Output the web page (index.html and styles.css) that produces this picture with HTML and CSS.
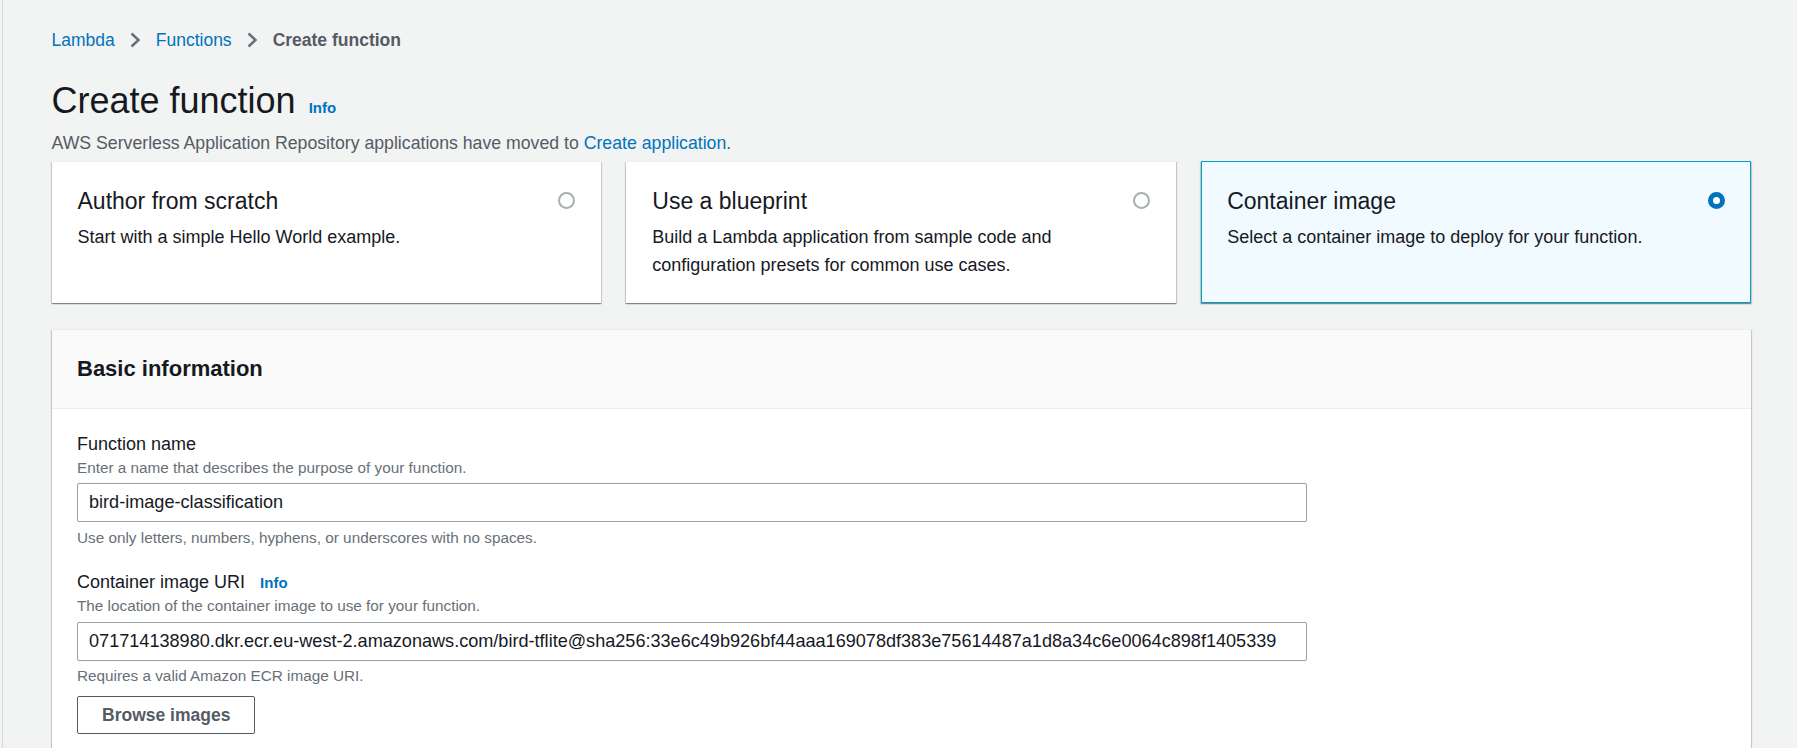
FILE: index.html
```html
<!DOCTYPE html>
<html lang="en">
<head>
<meta charset="utf-8">
<title>Create function</title>
<link rel="stylesheet" href="styles.css">
</head>
<body>
<div class="page">
  <main class="content">
    <nav class="breadcrumbs">
      <a class="crumb-link" href="#">Lambda</a>
      <svg class="crumb-sep" viewBox="0 0 12 16" width="12" height="16"><path d="M2.5 1.5 L9.5 8 L2.5 14.5" fill="none" stroke="#687078" stroke-width="2.5"/></svg>
      <a class="crumb-link" href="#">Functions</a>
      <svg class="crumb-sep" viewBox="0 0 12 16" width="12" height="16"><path d="M2.5 1.5 L9.5 8 L2.5 14.5" fill="none" stroke="#687078" stroke-width="2.5"/></svg>
      <span class="crumb-current">Create function</span>
    </nav>

    <header class="page-header">
      <h1 class="page-title">Create function</h1>
      <a class="info-link info-link--title" href="#">Info</a>
    </header>
    <p class="page-desc">AWS Serverless Application Repository applications have moved to <a class="link" href="#">Create application</a>.</p>

    <div class="tiles">
      <div class="tile">
        <div class="tile-head">
          <span class="tile-title">Author from scratch</span>
          <span class="radio"></span>
        </div>
        <p class="tile-desc">Start with a simple Hello World example.</p>
      </div>
      <div class="tile">
        <div class="tile-head">
          <span class="tile-title">Use a blueprint</span>
          <span class="radio"></span>
        </div>
        <p class="tile-desc">Build a Lambda application from sample code and configuration presets for common use cases.</p>
      </div>
      <div class="tile tile--selected">
        <div class="tile-head">
          <span class="tile-title">Container image</span>
          <span class="radio radio--checked"></span>
        </div>
        <p class="tile-desc">Select a container image to deploy for your function.</p>
      </div>
    </div>

    <section class="panel">
      <div class="panel-header">
        <h2 class="panel-title">Basic information</h2>
      </div>
      <div class="panel-body">
        <div class="field">
          <div class="field-label">Function name</div>
          <div class="field-desc">Enter a name that describes the purpose of your function.</div>
          <div class="input">bird-image-classification</div>
          <div class="field-hint">Use only letters, numbers, hyphens, or underscores with no spaces.</div>
        </div>
        <div class="field field--second">
          <div class="field-label">Container image URI <a class="info-link info-link--label" href="#">Info</a></div>
          <div class="field-desc">The location of the container image to use for your function.</div>
          <div class="input">071714138980.dkr.ecr.eu-west-2.amazonaws.com/bird-tflite@sha256:33e6c49b926bf44aaa169078df383e75614487a1d8a34c6e0064c898f1405339</div>
          <div class="field-hint">Requires a valid Amazon ECR image URI.</div>
          <button class="btn">Browse images</button>
        </div>
      </div>
    </section>
  </main>
</div>
</body>
</html>
```

FILE: styles.css
```css
* { box-sizing: border-box; }

html, body {
  margin: 0;
  padding: 0;
  background: #f2f3f3;
  font-family: "Liberation Sans", Arial, sans-serif;
  color: #16191f;
}

.page {
  margin-left: 2px;
  border-left: 1px solid #d5dbdb;
  min-height: 760px;
}

.content {
  padding: 28px 46px 40px 48.5px;
}

a { text-decoration: none; }

/* Breadcrumbs */
.breadcrumbs {
  display: flex;
  align-items: center;
  height: 24px;
  font-size: 17.5px;
  line-height: 24px;
}
.crumb-link { color: #0073bb; }
.crumb-sep { margin: 0 15px 0 14px; display: block; }
.crumb-current { color: #545b64; font-weight: bold; }

/* Header */
.page-header {
  display: flex;
  align-items: baseline;
  margin-top: 28px;
}
.page-title {
  margin: 0;
  font-size: 36px;
  line-height: 42px;
  font-weight: normal;
  color: #16191f;
}
.info-link {
  color: #0073bb;
  font-weight: bold;
  font-size: 15px;
}
.info-link--title { margin-left: 13px; }
.info-link--label { margin-left: 10px; }

.page-desc {
  margin: 9px 0 0;
  font-size: 17.7px;
  line-height: 24px;
  color: #545b64;
}
.link { color: #0073bb; }

/* Tiles */
.tiles {
  display: grid;
  grid-template-columns: repeat(3, 1fr);
  gap: 25px;
  margin-top: 6px;
}
.tile {
  background: #fff;
  border: 1px solid transparent;
  border-top-color: #eaeded;
  box-shadow: 0 1px 1px 0 rgba(0, 28, 36, 0.3), 1px 1px 1px 0 rgba(0, 28, 36, 0.15), -1px 1px 1px 0 rgba(0, 28, 36, 0.15);
  padding: 25px 25px 23px 25px;
  height: 142px;
}
.tile--selected {
  background: #f1faff;
  border: 1px solid #00a1c9;
}
.tile-head {
  display: flex;
  align-items: center;
  justify-content: space-between;
  height: 28px;
}
.tile-title {
  font-size: 23px;
  line-height: 28px;
  color: #16191f;
}
.tile-desc {
  margin: 8px 0 0;
  font-size: 18px;
  line-height: 28px;
  color: #16191f;
}
.radio {
  width: 17px;
  height: 17px;
  border-radius: 50%;
  border: 2px solid #a3b0b1;
  background: #fff;
  margin-top: -2px;
  flex: none;
}
.radio--checked {
  border: 5px solid #0073bb;
}

/* Panel */
.panel {
  margin-top: 26px;
  background: #fff;
  border-top: 1px solid #eaeded;
  box-shadow: 0 1px 1px 0 rgba(0, 28, 36, 0.3), 1px 1px 1px 0 rgba(0, 28, 36, 0.15), -1px 1px 1px 0 rgba(0, 28, 36, 0.15);
}
.panel-header {
  background: #fafafa;
  border-bottom: 1px solid #eaeded;
  padding: 25px 25.5px;
}
.panel-title {
  margin: 0;
  font-size: 22px;
  line-height: 28px;
  font-weight: bold;
  color: #16191f;
}
.panel-body {
  padding: 23px 25.5px 60px;
}

.field--second { margin-top: 22px; }
.field-label {
  font-size: 18px;
  line-height: 24px;
  color: #16191f;
}
.field-desc {
  margin-top: 1.5px;
  font-size: 15.3px;
  line-height: 20px;
  color: #687078;
}
.input {
  margin-top: 5.5px;
  width: 1230px;
  height: 39px;
  border: 1px solid #95a1a2;
  border-radius: 2px;
  padding: 0 11px;
  font-size: 18.1px;
  line-height: 37px;
  color: #16191f;
  background: #fff;
  white-space: nowrap;
  overflow: hidden;
}
.field-hint {
  margin-top: 5.5px;
  font-size: 15.3px;
  line-height: 20px;
  color: #687078;
}
.btn {
  display: block;
  margin-top: 10px;
  height: 38px;
  padding: 0 24px;
  border: 1px solid #545b64;
  border-radius: 2px;
  background: #fff;
  color: #545b64;
  font-family: "Liberation Sans", Arial, sans-serif;
  font-weight: bold;
  font-size: 17.5px;
  line-height: 36px;
}
```
